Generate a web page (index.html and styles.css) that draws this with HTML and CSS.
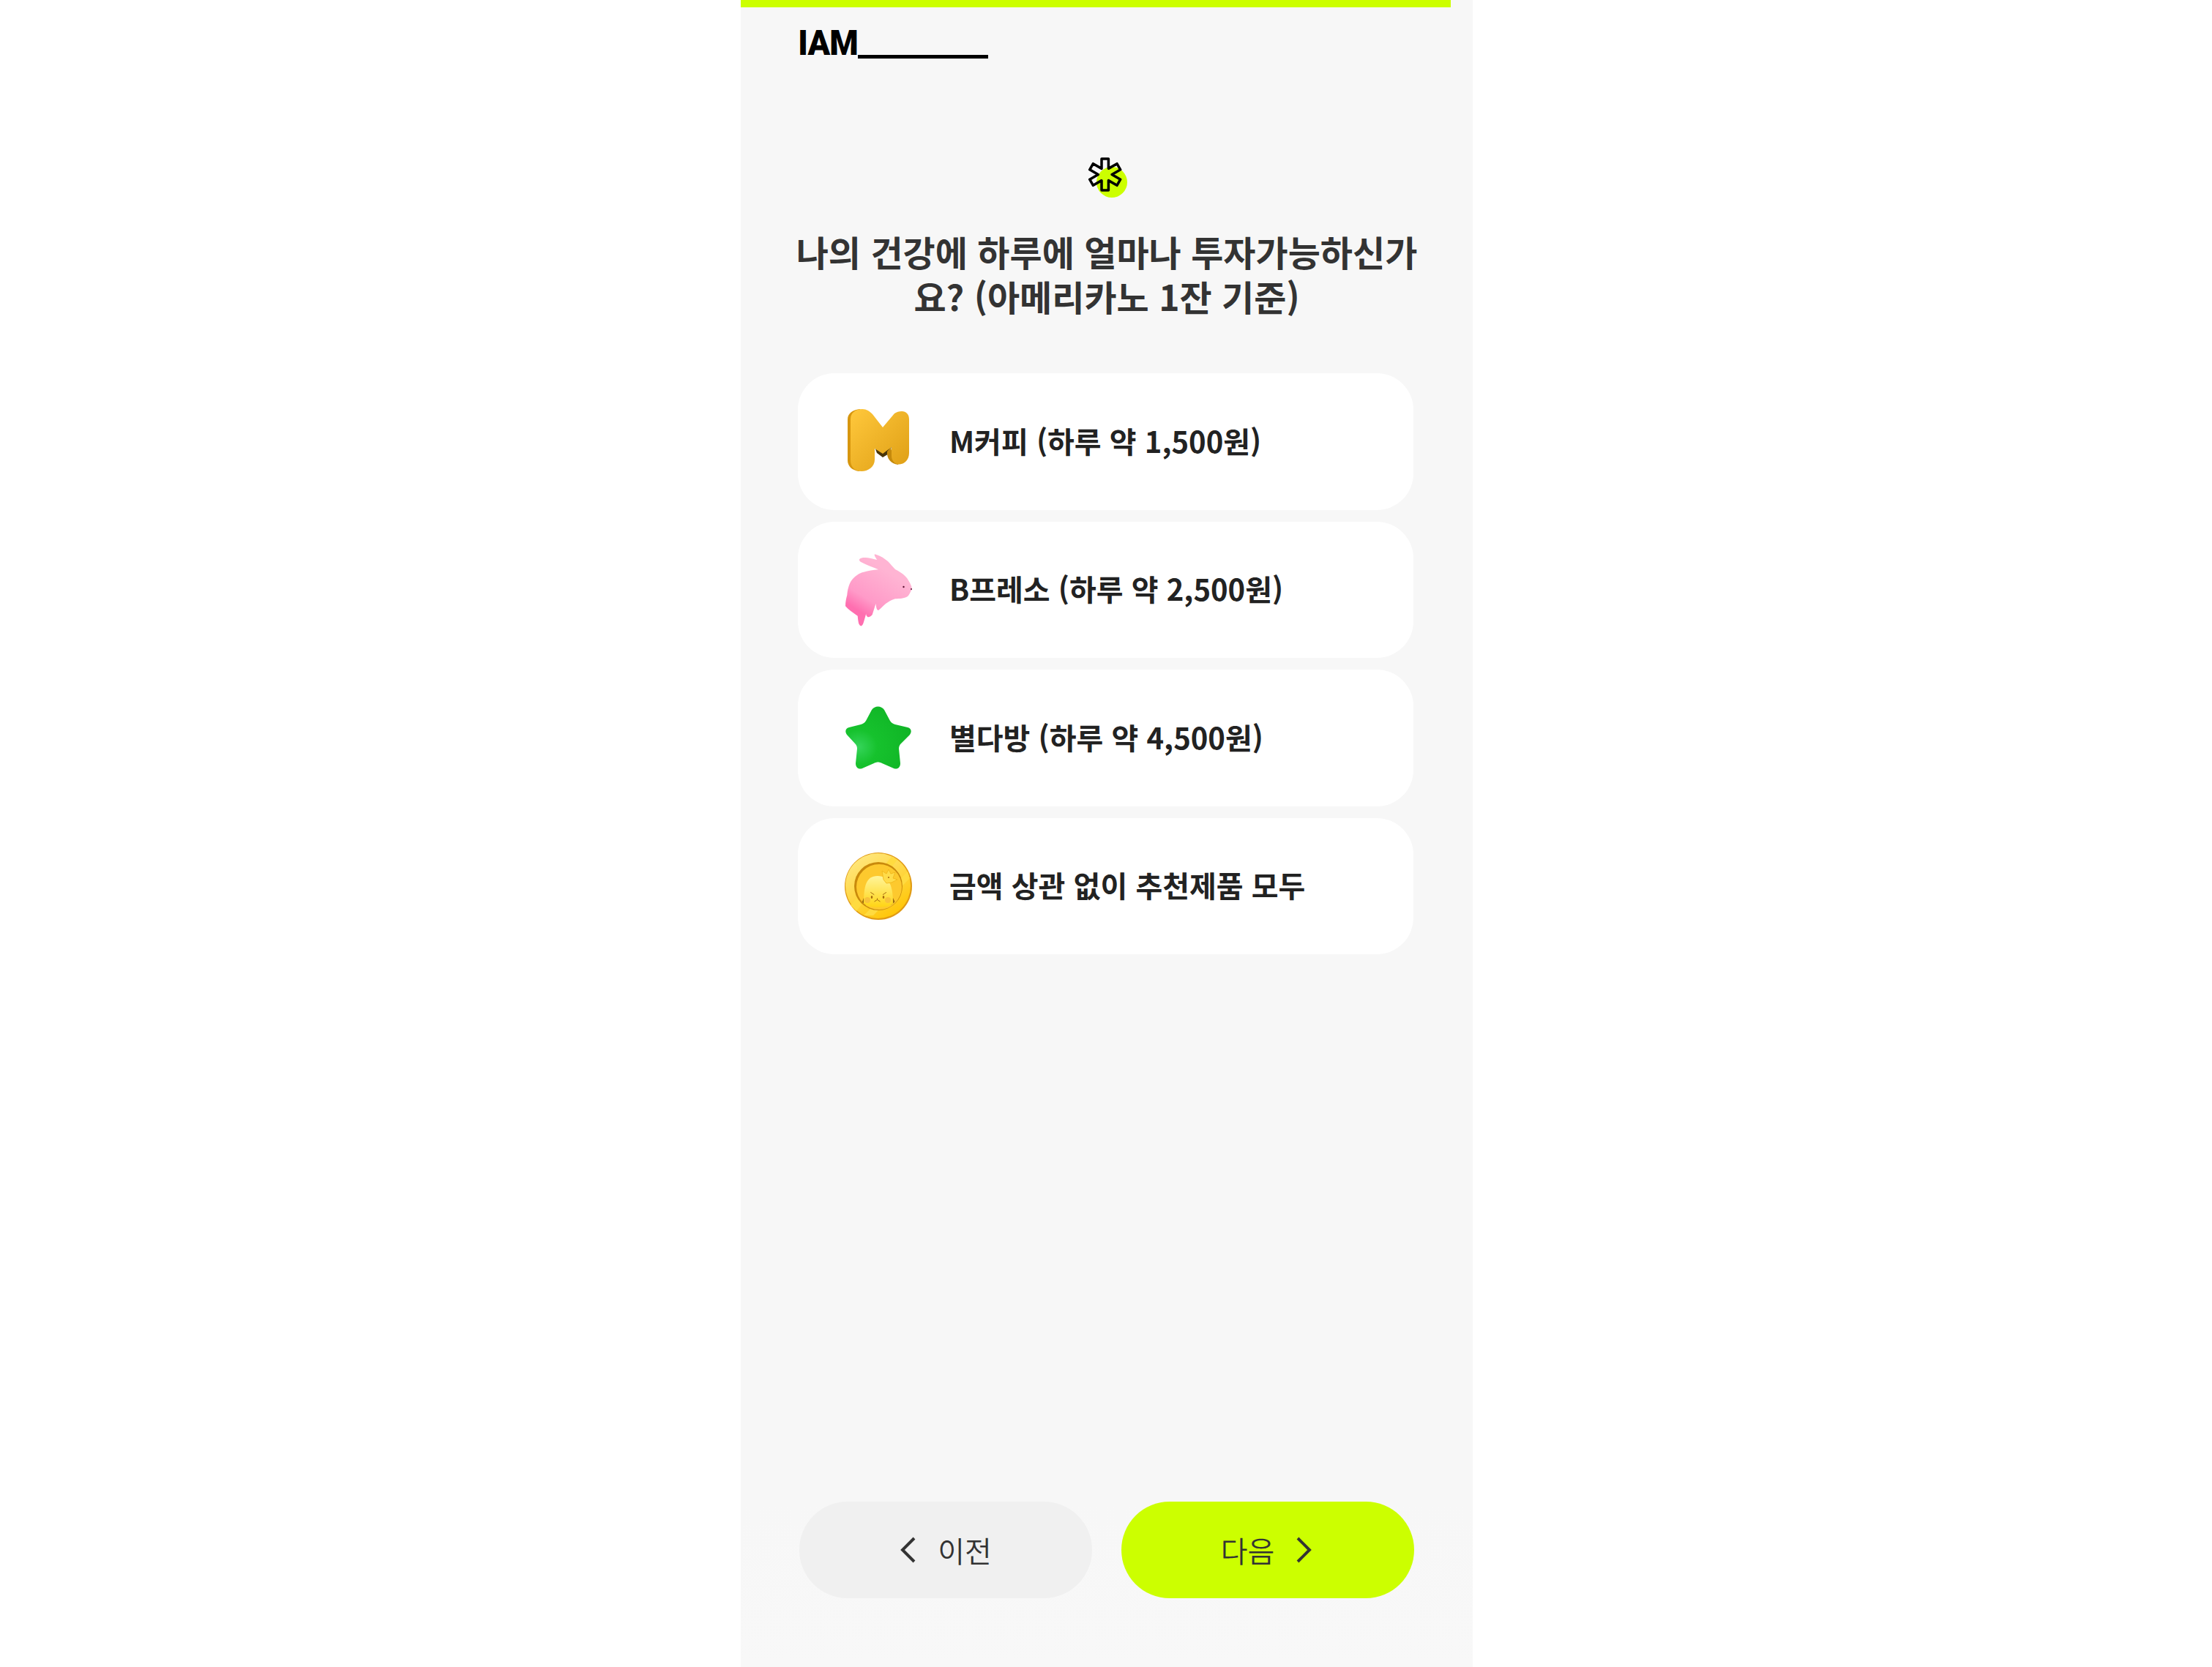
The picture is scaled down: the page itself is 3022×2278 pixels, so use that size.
FILE: index.html

```html
<!DOCTYPE html>
<html lang="ko">
<head>
<meta charset="UTF-8">
<title>IAM</title>
<link rel="stylesheet" href="styles.css">
</head>
<body>

	<div class="main">

		<div class="progress"></div>

		<header class="top">
			<span class="logo">IAM</span><span class="logo-line"></span>
		</header>

		<section class="question">
			<svg class="mark" viewBox="0 0 56 58" width="56" height="58">
				<circle cx="35" cy="35" r="21" fill="#ccff00"/>
				<path d="M21 3h9.400v13.360l11.570-6.680 4.700 8.140-11.570 6.680 11.570 6.680-4.700 8.140-11.570-6.680V46H21V32.640L9.430 39.320l-4.700-8.140L16.300 24.500 4.730 17.820l4.700-8.140L21 16.360z" fill="none" stroke="#000" stroke-width="3.500" stroke-linejoin="round"/>
			</svg>
			<h1>나의 건강에 하루에 얼마나 투자가능하신가요? (아메리카노 1잔 기준)</h1>
		</section>

		<div class="options">
			<div class="option">
				<svg class="icon" viewBox="0 0 100 100">
					<defs>
						<linearGradient id="mface" x1="0" y1="0" x2="1" y2="1">
							<stop offset="0" stop-color="#ffc83c"/>
							<stop offset="1" stop-color="#de9e14"/>
						</linearGradient>
					</defs>
					<path d="M8 20C8 11 16 7 25 6L32 20 24 91C14 90 8 84 8 76z" fill="#d7960e"/>
					<path d="M45 58L56 65 68 56 66 66 56 72 48 66z" fill="#4a3508"/>
					<path d="M67 58L62 64C61 73 67 81 77 82 83 76 68 70 67 58z" fill="#c58a0c"/>
					<path d="M12 20C12 11 19 6 28 6 34 6 38 9 42 13L56 31 72 12C75 10 78 9 82 9 88 9 92 13 92 20V66C92 75 86 81 79 81.500 72 81.500 68 76 68 70V58L56 67 45 60V75C45 85 36 91 27 91 18 91 12 85 12 76z" fill="url(#mface)"/>
				</svg>
				<span class="label">M커피 (하루 약 1,500원)</span>
			</div>
			<div class="option">
				<svg class="icon" viewBox="0 0 100 100">
					<defs>
						<linearGradient id="rbody" x1="0.3" y1="0.85" x2="0.65" y2="0.25">
							<stop offset="0" stop-color="#ff6fb0"/>
							<stop offset="0.3" stop-color="#ff9ac8"/>
							<stop offset="1" stop-color="#ffb4d3"/>
						</linearGradient>
					</defs>
					<path d="M45 1.300C52 3 58 7 63 11 67 15 70 19 73 22 81 26 88 31 91 37 94 42 96 46 95.700 49 94 53 92 57 90 59 85 62 79 62 73 62.300 68 64 64 66 60 69 56 72 53 76 50 78 48 78 47 74 46.500 69L41.700 84C39 87 36 88 35 86.700 33.500 85 33 84 33.300 82.300 32 87 31 91 30 94 29 98 27 100 26 99.300 23 98 22.500 94 21.700 85.700 15 81 9 77 5 72.300 5 67 6 62 7.300 57.300 8 49 10 42 13.300 37.300 18 31 24 27 30 25.700 36 24 43 23 50 22.300 42 19 34 16 26.700 12.300 24 11 23.500 9 24.300 8 26 6 30 5.700 33 6 38 6.500 44 8 48.300 9 46 6 44 3 45 1.300z" fill="url(#rbody)"/>
					<circle cx="84.500" cy="46" r="1.200" fill="#5a1030"/>
					<circle cx="95" cy="49" r="1" fill="#5a1030"/>
				</svg>
				<span class="label">B프레소 (하루 약 2,500원)</span>
			</div>
			<div class="option">
				<svg class="icon" viewBox="0 0 100 100">
					<defs>
						<radialGradient id="sface" cx="0.2" cy="0.65" r="0.8">
							<stop offset="0" stop-color="#35d45a"/>
							<stop offset="0.35" stop-color="#16c22d"/>
							<stop offset="1" stop-color="#10b526"/>
						</radialGradient>
					</defs>
					<path d="M41 12C45 6 54 6 58 12L66 27C68 30 70 31 73 32L90 36C95 37 96 42 93 46L81 58C79 60 78 62 78 65L80 85C80 91 76 94 71 92L55 85C51 83 48 83 44 85L28 92C23 94 19 91 19 85L21 65C21 62 20 60 18 58L7 46C4 42 5 37 10 36L26 32C29 31 31 30 33 27z" fill="url(#sface)"/>
				</svg>
				<span class="label">별다방 (하루 약 4,500원)</span>
			</div>
			<div class="option">
				<svg class="icon" viewBox="0 0 100 100">
					<defs>
						<linearGradient id="cring" x1="0.2" y1="0" x2="0.8" y2="1">
							<stop offset="0" stop-color="#ffe882"/>
							<stop offset="1" stop-color="#ffc400"/>
						</linearGradient>
						<linearGradient id="cface" x1="0" y1="0" x2="0" y2="1">
							<stop offset="0" stop-color="#fff59a"/>
							<stop offset="1" stop-color="#ffd415"/>
						</linearGradient>
						<clipPath id="cclip"><circle cx="50" cy="50" r="31"/></clipPath>
					</defs>
					<circle cx="50" cy="50" r="46" fill="#e09a14"/>
					<circle cx="49.500" cy="49.500" r="44.500" fill="url(#cring)"/>
					<path d="M12 76L68 10l8 4L20 84zM30 90L90 30l3 9-50 51z" fill="#ffdb40"/>
					<circle cx="50" cy="50" r="33" fill="#c98a0c"/>
					<circle cx="51" cy="51" r="31" fill="#fdc92e"/>
					<g clip-path="url(#cclip)">
						<path d="M30 66l6 10H26zM70 66l-5 10h10z" fill="#9a6a12"/>
						<path d="M30 74C30 50 33 36 49 36 65 36 70 50 70 74 70 80 30 80 30 74z" fill="url(#cface)"/>
						<circle cx="35" cy="69" r="4" fill="#f7c23c"/>
						<circle cx="63" cy="69" r="4" fill="#f7c23c"/>
					</g>
					<path d="M57 41L55 29 61 33 64 27 67 33 73 31 70 39 76 41 68 45 61 46z" fill="#ffdc4a" stroke="#efb416" stroke-width="0.800"/>
					<circle cx="64" cy="38" r="1" fill="#a8660c"/>
					<ellipse cx="41" cy="65" rx="1.300" ry="2" fill="#a66a10"/>
					<ellipse cx="57" cy="65" rx="1.300" ry="2" fill="#a66a10"/>
					<path d="M39.300 58.300l5 3.400M61 58.300l-5 3.400M44.500 71l4-2.500 4 2.500M48.500 66.500v2" fill="none" stroke="#a66a10" stroke-width="1"/>
				</svg>
				<span class="label">금액 상관 없이 추천제품 모두</span>
			</div>
		</div>

		<footer class="bottom">
			<button type="button" class="btn btn-prev">
				<svg class="chev" viewBox="0 0 22 36" width="22" height="36"><path d="M20 2L4 18l16 16" fill="none" stroke="#333" stroke-width="4"/></svg>
				<span>이전</span>
			</button>
			<button type="button" class="btn btn-next">
				<span>다음</span>
				<svg class="chev" viewBox="0 0 22 36" width="22" height="36"><path d="M2 2l16 16L2 34" fill="none" stroke="#333" stroke-width="4"/></svg>
			</button>
		</footer>

	</div>

</body>
</html>
```

FILE: styles.css

```css
html, body {
	margin: 0;
	height: 100%;
}

body {
	background: #fff;
	font-family: "Noto Sans CJK KR", "Noto Sans", sans-serif;
	color: #333;
}

.main {
	box-sizing: border-box;
	width: 1000px;
	height: 2278px;
	margin: 0 0 0 1012px;
	background: #f7f7f7;
	display: flex;
	flex-direction: column;
}

.progress {
	width: 970px;
	height: 10px;
	background: #ccff00;
}

.top {
	display: flex;
	align-items: flex-end;
	height: 70px;
	padding-left: 75px;
}

.logo {
	font-family: Roboto, sans-serif;
	font-weight: 900;
	font-size: 49px;
	line-height: 35px;
	height: 35px;
	width: 83px;
	margin-bottom: 4px;
	letter-spacing: -1px;
	color: #000;
	transform: scaleX(0.92);
}

.logo-line {
	width: 178px;
	height: 5px;
	margin-left: 2px;
	background: #000;
}

.question {
	display: flex;
	flex-direction: column;
	align-items: center;
	padding: 134px 70px 0;
}

.mark {
	display: block;
}

h1 {
	margin: 41px 0 0;
	font-size: 48px;
	line-height: 61px;
	font-weight: 700;
	text-align: center;
	color: #333;
}

.options {
	display: flex;
	flex-direction: column;
	gap: 16px;
	margin: 75px 81px 0 78px;
}

.option {
	display: flex;
	align-items: center;
	height: 186.500px;
	padding-left: 60px;
	border-radius: 50px;
	background: #fff;
}

.icon {
	width: 100px;
	height: 100px;
	flex: none;
}

.label {
	margin: 0 0 3px 47px;
	font-size: 40px;
	font-weight: 700;
	color: #222;
}

.bottom {
	display: flex;
	gap: 40px;
	margin-top: auto;
	padding: 0 80px 94px;
	background: linear-gradient(#f7f7f7, #f8f8f8);
}

.btn {
	flex: none;
	width: 400px;
	display: flex;
	align-items: center;
	justify-content: center;
	gap: 30px;
	height: 132px;
	border: 0;
	border-radius: 66px;
	font-family: inherit;
	font-size: 40px;
	font-weight: 350;
	color: #333;
}

.btn-prev {
	background: #f0f0f0;
}

.btn-next {
	background: #ccff00;
	padding-right: 9px;
}
```
